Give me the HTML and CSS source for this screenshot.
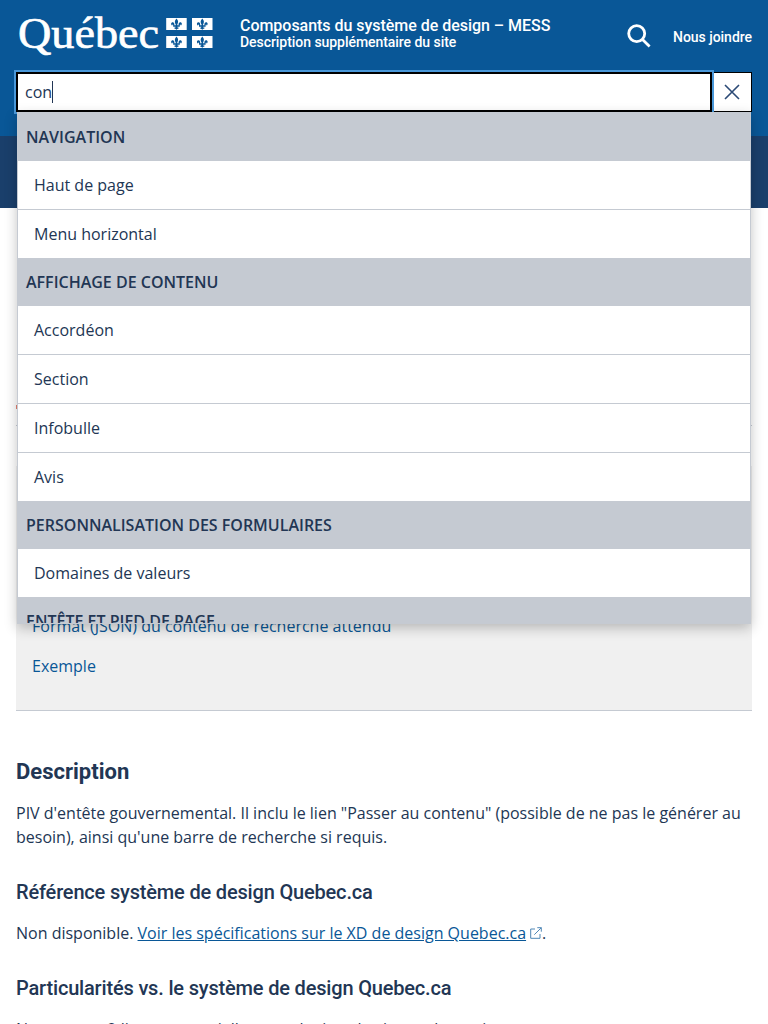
FILE: index.html
```html
<!DOCTYPE html>
<html lang="fr">
<head>
<meta charset="utf-8">
<title>Composants du système de design – MESS</title>
<link rel="stylesheet" href="styles.css">
</head>
<body>
<header class="piv">
  <div class="piv-top">
    <svg class="logo" width="200" height="50" viewBox="0 0 200 50" role="img" aria-label="Québec">
      <defs>
        <g id="lys">
          <path d="M0-5.500C-2.200-3-1.800-1.500-.8.300V1.200H-2.200C-1.800-.2-2.400-1.800-3.800-1.800-5.600-1.800-5.900.6-4.300 1.500-4.300.4-3.300.2-3.300 1.500V2.700H-.9C-1.200 3.900-2 4-2.600 3.700-1.800 4.900-.7 4.600 0 5.800.7 4.600 1.800 4.900 2.600 3.700 2 4 1.200 3.900.9 2.700H3.300V1.500C3.300.2 4.300.4 4.300 1.500 5.900.6 5.600-1.800 3.800-1.800 2.400-1.800 1.800-.2 2.200 1.200H.8V.3C1.800-1.500 2.200-3 0-5.500Z"/>
        </g>
      </defs>
      <text class="logo-word" x="2" y="38" textLength="141" lengthAdjust="spacingAndGlyphs">Québec</text>
      <g class="logo-flag"><path d="M150.200 8h20.500v12h-20.500zM176 8h20.500v12h-20.500zM150.200 26h20.500v12h-20.500zM176 26h20.500v12h-20.500z"/></g>
      <g class="logo-lys">
        <use href="#lys" x="160.500" y="14"/><use href="#lys" x="186.300" y="14"/>
        <use href="#lys" x="160.500" y="32"/><use href="#lys" x="186.300" y="32"/>
      </g>
    </svg>
    <div class="site">
      <div class="site-title">Composants du système de design – MESS</div>
      <div class="site-desc">Description supplémentaire du site</div>
    </div>
    <svg class="loupe" width="24" height="24" viewBox="0 0 24 24"><circle cx="9.700" cy="9.600" r="8"/><path d="M15.500 15.500 22.600 22.400"/></svg>
    <a class="contact">Nous joindre</a>
  </div>
  <div class="search">
    <div class="field"><span>con</span><i class="caret"></i></div>
    <div class="close"><svg width="16" height="16" viewBox="0 0 16 16"><path d="M1 1 15 15M15 1 1 15"/></svg></div>
    <div class="results">
      <h4>Navigation</h4>
      <ul><li>Haut de page</li><li>Menu horizontal</li></ul>
      <h4>Affichage de contenu</h4>
      <ul><li>Accordéon</li><li>Section</li><li>Infobulle</li><li>Avis</li></ul>
      <h4>Personnalisation des formulaires</h4>
      <ul><li>Domaines de valeurs</li></ul>
      <h4>Entête et pied de page</h4>
    </div>
  </div>
</header>
<div class="menu-band"></div>
<main>
  <div class="marker"></div>
  <nav class="toc">
    <a>Format (JSON) du contenu de recherche attendu</a>
    <a>Exemple</a>
  </nav>
  <h2>Description</h2>
  <p>PIV d'entête gouvernemental. Il inclu le lien "Passer au contenu" (possible de ne pas le générer au besoin), ainsi qu'une barre de recherche si requis.</p>
  <h3>Référence système de design Quebec.ca</h3>
  <p>Non disponible. <a class="link">Voir les spécifications sur le XD de design Quebec.ca</a><svg class="ext" width="12" height="12" viewBox="0 0 12 12"><path d="M5 2H.7v9.300H10V7M7.300.7h4v4M11.300.7 4.300 7.700"/></svg>.</p>
  <h3>Particularités vs. le système de design Quebec.ca</h3>
  <p>Nous avons 2 lignes potentielles pour le titre du site sur la version</p>
</main>
</body>
</html>
```

FILE: styles.css
```css
* { box-sizing: border-box; }
html { height: 1024px; overflow: hidden; }
body { margin: 0; height: 1024px; overflow: hidden; background: #fff; color: #223654; font: 400 16px/24px "Open Sans", "Noto Sans", sans-serif; }
.piv { height: 136px; padding: 0 16px; background: #095797; }
.piv-top { display: flex; align-items: flex-start; height: 72px; padding-top: 10px; color: #fff; font-family: Roboto, sans-serif; }
.logo { flex: none; }
.logo-word { font: 400 45px "Liberation Serif", serif; fill: #fff; stroke: #fff; stroke-width: .7; }
.logo-flag { fill: #fff; }
.logo-lys { fill: #095797; }
.site { flex: 1; padding: 7px 0 0 24px; font-weight: 500; }
.site-title { font-size: 16px; line-height: 18px; letter-spacing: -.03px; }
.site-desc { font-size: 14px; line-height: 14px; letter-spacing: -.05px; }
.loupe { margin: 14px 22px 0 0; fill: none; stroke: #fff; stroke-width: 2.8; }
.contact { margin-top: 17px; font-size: 14px; line-height: 20px; font-weight: 500; letter-spacing: -.03px; }
.search { position: relative; display: flex; height: 40px; }
.field { display: flex; align-items: center; width: 696px; padding: 0 7px; border: 2px solid #000; background: #fff; box-shadow: 0 0 0 2px #4a98d9; }
.caret { width: 1px; height: 22px; background: #223654; }
.close { position: relative; display: flex; align-items: center; justify-content: center; width: 38px; margin-left: 2px; padding-right: 1px; border: 1px solid #000; border-left: 0; background: #fff; }
.close svg { fill: none; stroke: #2b4a76; stroke-width: 1.6; }
.results { position: absolute; z-index: 2; top: 40px; left: 1px; width: 734px; height: 512px; overflow: hidden; border: 1px solid #c5cad2; border-top: 0; background: #fff; box-shadow: 0 4px 12px rgba(0, 0, 0, .24); }
.results h4 { height: 48px; margin: 0; padding: 0 8px; background: #c5cad2; font-size: 16px; line-height: 48px; font-weight: 600; text-transform: uppercase; }
.results h4:first-child { height: 49px; line-height: 50px; }
.results ul { margin: 0; padding: 0; list-style: none; }
.results li { height: 49px; padding: 0 16px; border-bottom: 1px solid #c5cad2; line-height: 48px; }
.results li:last-child { height: 48px; border-bottom: 0; }
.menu-band { height: 72px; background: #1a3f6b; }
main { padding: 197px 16px 0; }
.marker { width: 1px; height: 4px; background: #e58271; }
.toc { display: flex; flex-direction: column; gap: 16px; height: 286px; margin-top: 16px; padding: 188px 16px 0; border: solid #c5cad2; border-width: 1px 0; background: linear-gradient(#fff 40px, #f0f0f0 40px); color: #095797; }
h2, h3 { margin: 0; font-family: Roboto, sans-serif; }
h2 { margin-top: 49px; font-size: 22px; line-height: 24px; font-weight: 700; }
h3 { margin-top: 31px; font-size: 20px; line-height: 24px; font-weight: 500; letter-spacing: -.175px; }
p { margin: 17px 0 0; }
.link { color: #095797; text-decoration: underline; }
.ext { margin-left: 4px; fill: none; stroke: #4f87b6; }
```
